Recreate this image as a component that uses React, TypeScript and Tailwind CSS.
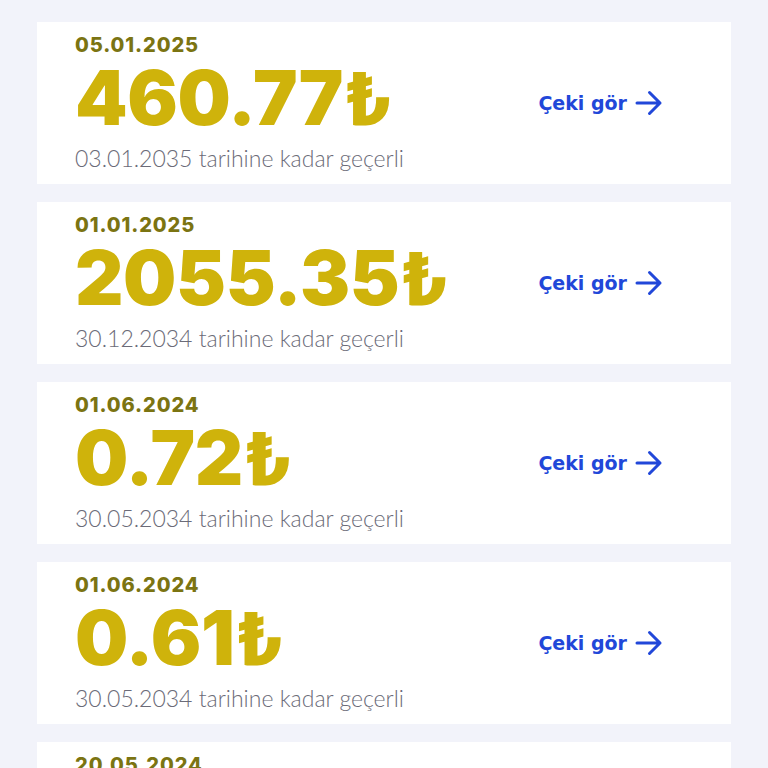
import React from "react";

interface Voucher {
  date: string;
  amount: string;
  validUntil: string;
}

const vouchers: Voucher[] = [
  { date: "05.01.2025", amount: "460.77", validUntil: "03.01.2035" },
  { date: "01.01.2025", amount: "2055.35", validUntil: "30.12.2034" },
  { date: "01.06.2024", amount: "0.72", validUntil: "30.05.2034" },
  { date: "01.06.2024", amount: "0.61", validUntil: "30.05.2034" },
  { date: "20.05.2024", amount: "0.40", validUntil: "18.05.2034" },
];

function ArrowIcon() {
  return (
    <svg width="28" height="26" viewBox="0 0 28 26" fill="none" className="shrink-0">
      <path
        d="M2 13H25M14.5 2.5L25 13L14.5 23.5"
        stroke="currentColor"
        strokeWidth="3"
        strokeLinecap="round"
        strokeLinejoin="round"
      />
    </svg>
  );
}

function VoucherCard({ voucher }: { voucher: Voucher }) {
  return (
    <div className="flex h-[162px] items-center justify-between bg-white pl-[38px] pr-[68px]">
      <div className="flex h-full flex-col pt-[11px]">
        <div className="font-['Inter',sans-serif] text-[20px] font-extrabold leading-[24px] tracking-[0.045em] text-[#7b7412]">
          {voucher.date}
        </div>
        <div className="mt-[3px] flex items-baseline font-['Inter',sans-serif] text-[75px] font-black leading-[76px] tracking-[-0.005em] text-[#cfb30b]">
          <span>{voucher.amount}</span>
          <span className="ml-[3px] font-['Roboto',sans-serif]">₺</span>
        </div>
        <div className="mt-[8px] font-['Lato',sans-serif] text-[23px] font-light leading-[26px] text-[#6b6b78]">
          {voucher.validUntil} tarihine kadar geçerli
        </div>
      </div>
      <a className="flex items-center gap-[8px] font-['DejaVu_Sans',sans-serif] text-[19px] font-bold text-[#2147d9]">
        <span>Çeki gör</span>
        <ArrowIcon />
      </a>
    </div>
  );
}

export default function App() {
  return (
    <div className="min-h-screen bg-[#f2f3fa] px-[37px] pt-[22px]">
      <div className="flex flex-col gap-[18px]">
        {vouchers.map((v, i) => (
          <VoucherCard key={i} voucher={v} />
        ))}
      </div>
    </div>
  );
}
